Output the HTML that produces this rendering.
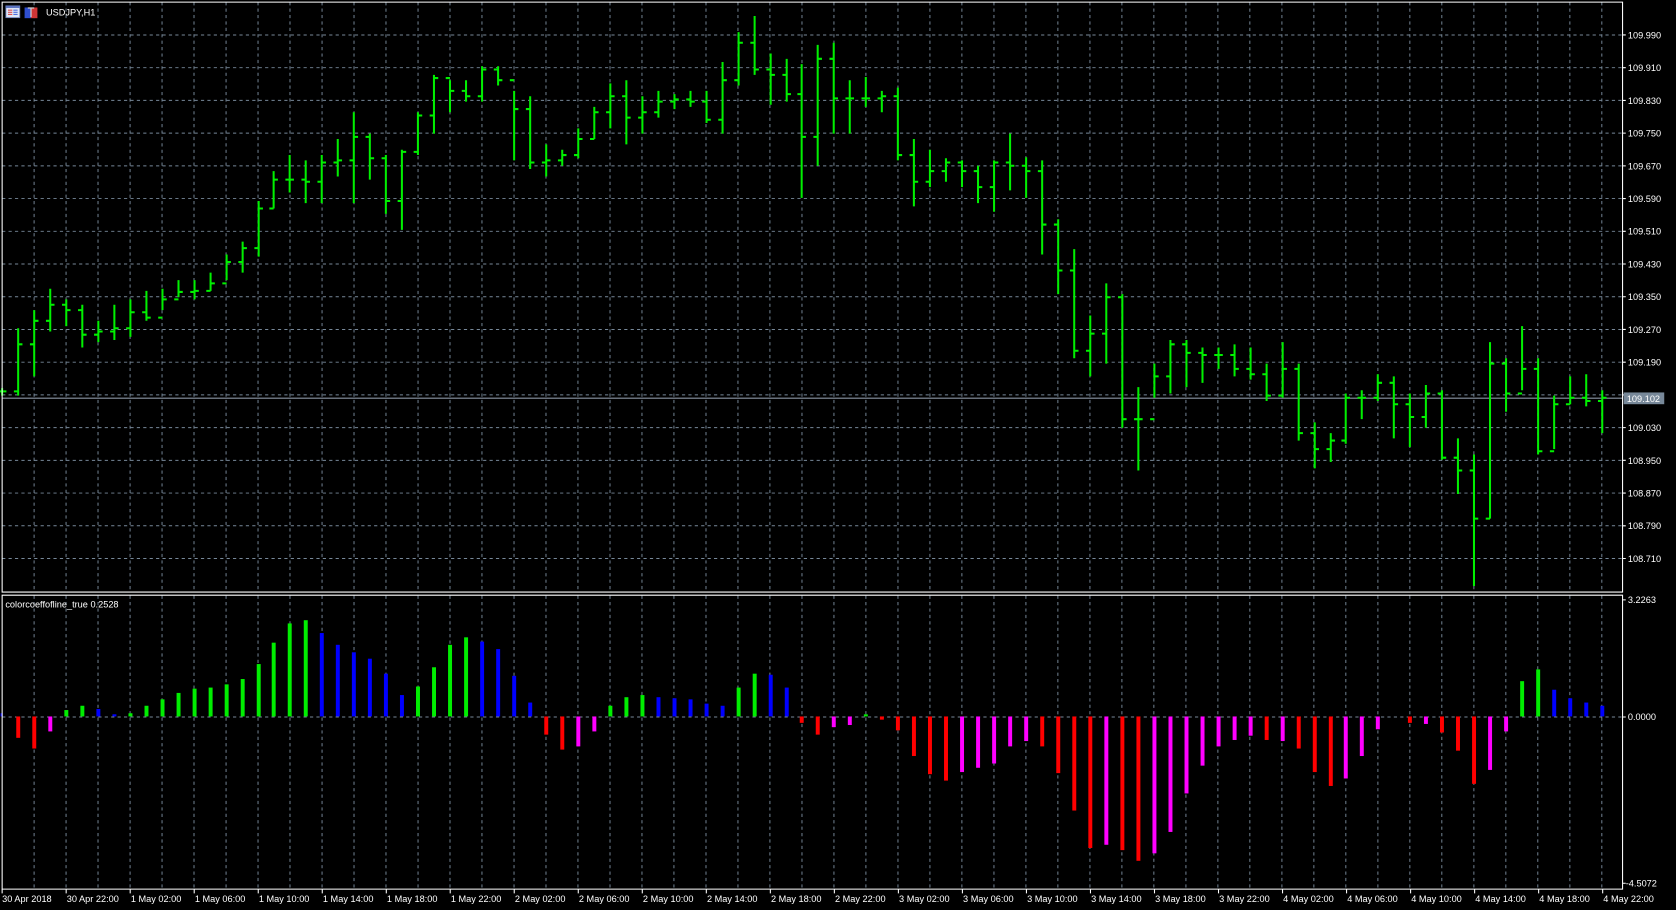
<!DOCTYPE html>
<html><head><meta charset="utf-8"><style>
html,body{margin:0;padding:0;background:#000;width:1676px;height:910px;overflow:hidden}
svg{display:block}
text{font-family:"Liberation Sans","DejaVu Sans",sans-serif;fill:#fff;font-size:8.6px}
</style></head><body>
<svg width="1676" height="910" viewBox="0 0 1568 851" preserveAspectRatio="none">
<rect width="1568" height="851" fill="#000"/>
<!-- grid vertical -->
<g stroke="#778899" stroke-width="0.9" stroke-dasharray="3,3">
<path d="M31.9 2V553M61.8 2V553M91.7 2V553M121.7 2V553M151.6 2V553M181.5 2V553M211.5 2V553M241.4 2V553M271.3 2V553M301.3 2V553M331.2 2V553M361.1 2V553M391.1 2V553M421 2V553M450.9 2V553M480.9 2V553M510.8 2V553M540.7 2V553M570.7 2V553M600.6 2V553M630.5 2V553M660.5 2V553M690.4 2V553M720.3 2V553M750.3 2V553M780.2 2V553M810.1 2V553M840.1 2V553M870 2V553M899.9 2V553M929.9 2V553M959.8 2V553M989.7 2V553M1019.7 2V553M1049.6 2V553M1079.5 2V553M1109.5 2V553M1139.4 2V553M1169.3 2V553M1199.3 2V553M1229.2 2V553M1259.1 2V553M1289.1 2V553M1319 2V553M1348.9 2V553M1378.9 2V553M1408.8 2V553M1438.7 2V553M1468.7 2V553M1498.6 2V553"/>
<path d="M31.9 557V831M61.8 557V831M91.7 557V831M121.7 557V831M151.6 557V831M181.5 557V831M211.5 557V831M241.4 557V831M271.3 557V831M301.3 557V831M331.2 557V831M361.1 557V831M391.1 557V831M421 557V831M450.9 557V831M480.9 557V831M510.8 557V831M540.7 557V831M570.7 557V831M600.6 557V831M630.5 557V831M660.5 557V831M690.4 557V831M720.3 557V831M750.3 557V831M780.2 557V831M810.1 557V831M840.1 557V831M870 557V831M899.9 557V831M929.9 557V831M959.8 557V831M989.7 557V831M1019.7 557V831M1049.6 557V831M1079.5 557V831M1109.5 557V831M1139.4 557V831M1169.3 557V831M1199.3 557V831M1229.2 557V831M1259.1 557V831M1289.1 557V831M1319 557V831M1348.9 557V831M1378.9 557V831M1408.8 557V831M1438.7 557V831M1468.7 557V831M1498.6 557V831"/>
<path d="M2 32.7H1518M2 63.3H1518M2 93.9H1518M2 124.5H1518M2 155.1H1518M2 185.7H1518M2 216.3H1518M2 246.9H1518M2 277.5H1518M2 308.1H1518M2 338.7H1518M2 369.3H1518M2 399.9H1518M2 430.5H1518M2 461.1H1518M2 491.7H1518M2 522.3H1518M2 670.5H1518"/>
</g>
<!-- current price line -->
<path d="M2 372.4H1518" stroke="#8a96a4" stroke-width="1"/>
<!-- price bars -->
<path fill="none" stroke="#00f000" stroke-width="1.9" d="
M2 363V370M-2 366H2M2 366H6
M17 307V370M13 366H17M17 322H21
M32 290V352M28 322H32M32 300H36
M47 270V310M43 300H47M47 285H51
M62 280V305M58 285H62M62 290H66
M77 285V325M73 290H77M77 313H81
M92 300V320M88 313H92M92 310H96
M107 285V318M103 310H107M107 307H111
M122 280V315M118 307H122M122 292H126
M137 272V300M133 292H137M137 297H141
M152 270V290M148 297H152M152 280H156
M167 262V278M163 280H167M167 273H171
M182 262V280M178 273H182M182 272H186
M197 255V272M193 272H197M197 265H201
M212 238V262M208 265H212M212 245H216
M227 226V255M223 245H227M227 232H231
M242 188V240M238 232H242M242 195H246
M256 160V195M252 195H256M256 168H260
M271 145V180M267 168H271M271 168H275
M286 150V190M282 168H286M286 170H290
M301 145V190M297 170H301M301 152H305
M316 130V165M312 152H316M316 150H320
M331 105V190M327 150H331M331 128H335
M346 125V168M342 128H346M346 148H350
M361 145V200M357 148H361M361 188H365
M376 140V215M372 188H376M376 142H380
M391 105V145M387 142H391M391 108H395
M406 70V125M402 108H406M406 73H410
M421 75V105M417 73H421M421 85H425
M436 75V95M432 85H436M436 90H440
M451 62V95M447 90H451M451 65H455
M466 62V80M462 65H466M466 75H470
M481 85V150M477 75H481M481 102H485
M496 90V158M492 102H496M496 152H500
M511 135V165M507 152H511M511 150H515
M526 140V155M522 150H526M526 145H530
M541 120V148M537 145H541M541 130H545
M556 100V130M552 130H556M556 105H560
M571 78V120M567 105H571M571 90H575
M586 75V135M582 90H586M586 110H590
M601 90V125M597 110H601M601 105H605
M616 85V110M612 105H616M616 95H620
M631 88V102M627 95H631M631 93H635
M646 85V100M642 93H646M646 95H650
M661 85V115M657 95H661M661 112H665
M676 58V125M672 112H676M676 75H680
M691 30V80M687 75H691M691 40H695
M706 15V70M702 40H706M706 65H710
M721 50V98M717 65H721M721 70H725
M736 55V95M732 70H736M736 88H740
M750 60V185M746 88H750M750 128H754
M765 42V155M761 128H765M765 55H769
M780 40V125M776 55H780M780 92H784
M795 75V125M791 92H795M795 92H799
M810 72V100M806 92H810M810 92H814
M825 85V105M821 92H825M825 90H829
M840 82V150M836 90H840M840 145H844
M855 130V193M851 145H855M855 170H859
M870 140V175M866 170H870M870 160H874
M885 148V170M881 160H885M885 152H889
M900 150V175M896 152H900M900 160H904
M915 155V190M911 160H915M915 175H919
M930 150V198M926 175H930M930 152H934
M945 125V178M941 152H945M945 155H949
M960 147V185M956 155H960M960 160H964
M975 150V238M971 160H975M975 210H979
M990 205V275M986 210H990M990 253H994
M1005 233V335M1001 253H1005M1005 328H1009
M1020 295V352M1016 328H1020M1020 312H1024
M1035 265V340M1031 312H1035M1035 278H1039
M1050 275V400M1046 278H1050M1050 392H1054
M1065 362V440M1061 392H1065M1065 392H1069
M1080 340V372M1076 392H1080M1080 352H1084
M1095 318V368M1091 352H1095M1095 322H1099
M1110 318V362M1106 322H1110M1110 330H1114
M1125 325V358M1121 330H1125M1125 332H1129
M1140 325V345M1136 332H1140M1140 332H1144
M1155 322V352M1151 332H1155M1155 345H1159
M1170 325V355M1166 345H1170M1170 350H1174
M1185 340V375M1181 350H1185M1185 370H1189
M1200 320V372M1196 370H1200M1200 345H1204
M1215 340V412M1211 345H1215M1215 405H1219
M1230 395V438M1226 405H1230M1230 420H1234
M1245 405V432M1241 420H1245M1245 412H1249
M1259 368V415M1255 412H1259M1259 372H1263
M1274 365V392M1270 372H1274M1274 372H1278
M1289 350V375M1285 372H1289M1289 358H1293
M1304 352V410M1300 358H1304M1304 378H1308
M1319 368V418M1315 378H1319M1319 390H1323
M1334 360V400M1330 390H1334M1334 368H1338
M1349 365V430M1345 368H1349M1349 428H1353
M1364 410V462M1360 428H1364M1364 440H1368
M1379 425V548M1375 440H1379M1379 485H1383
M1394 320V485M1390 485H1394M1394 340H1398
M1409 335V385M1405 340H1409M1409 368H1413
M1424 305V365M1420 368H1424M1424 345H1428
M1439 335V425M1435 345H1439M1439 422H1443
M1454 370V420M1450 422H1454M1454 378H1458
M1469 352V378M1465 378H1469M1469 372H1473
M1484 350V380M1480 372H1484M1484 375H1488
M1499 365V405M1495 375H1499M1499 372H1503"/>
<!-- histogram -->
<g>
<g fill="#ff0000">
<rect x="15.2" y="670" width="3.7" height="20"/><rect x="30.2" y="670" width="3.7" height="30"/>
<rect x="509.2" y="670" width="3.7" height="17"/><rect x="524.2" y="670" width="3.7" height="31"/>
<rect x="748.2" y="670" width="3.7" height="6"/><rect x="763.2" y="670" width="3.7" height="17"/>
<rect x="823.2" y="670" width="3.7" height="3"/><rect x="838.2" y="670" width="3.7" height="13"/>
<rect x="853.2" y="670" width="3.7" height="37"/><rect x="868.2" y="670" width="3.7" height="54"/>
<rect x="883.2" y="670" width="3.7" height="60"/>
<rect x="973.2" y="670" width="3.7" height="28"/><rect x="988.2" y="670" width="3.7" height="53"/>
<rect x="1003.2" y="670" width="3.7" height="88"/><rect x="1018.2" y="670" width="3.7" height="123"/>
<rect x="1048.2" y="670" width="3.7" height="125"/><rect x="1063.2" y="670" width="3.7" height="135"/>
<rect x="1183.2" y="670" width="3.7" height="22"/><rect x="1213.2" y="670" width="3.7" height="30"/>
<rect x="1228.2" y="670" width="3.7" height="52"/><rect x="1243.2" y="670" width="3.7" height="65"/>
<rect x="1317.2" y="670" width="3.7" height="6"/><rect x="1347.2" y="670" width="3.7" height="15"/>
<rect x="1362.2" y="670" width="3.7" height="32"/><rect x="1377.2" y="670" width="3.7" height="63"/>
</g>
<g fill="#ff00ff">
<rect x="45.2" y="670" width="3.7" height="14"/><rect x="539.2" y="670" width="3.7" height="28"/>
<rect x="554.2" y="670" width="3.7" height="14"/><rect x="778.2" y="670" width="3.7" height="10"/>
<rect x="793.2" y="670" width="3.7" height="8"/>
<rect x="898.2" y="670" width="3.7" height="52"/><rect x="913.2" y="670" width="3.7" height="48"/>
<rect x="928.2" y="670" width="3.7" height="44"/><rect x="943.2" y="670" width="3.7" height="28"/>
<rect x="958.2" y="670" width="3.7" height="23"/><rect x="1033.2" y="670" width="3.7" height="120"/>
<rect x="1078.2" y="670" width="3.7" height="128"/><rect x="1093.2" y="670" width="3.7" height="108"/>
<rect x="1108.2" y="670" width="3.7" height="72"/><rect x="1123.2" y="670" width="3.7" height="46"/>
<rect x="1138.2" y="670" width="3.7" height="28"/><rect x="1153.2" y="670" width="3.7" height="22"/>
<rect x="1168.2" y="670" width="3.7" height="18"/><rect x="1198.2" y="670" width="3.7" height="23"/>
<rect x="1257.2" y="670" width="3.7" height="58"/><rect x="1272.2" y="670" width="3.7" height="37"/>
<rect x="1287.2" y="670" width="3.7" height="12"/><rect x="1332.2" y="670" width="3.7" height="7"/>
<rect x="1392.2" y="670" width="3.7" height="50"/><rect x="1407.2" y="670" width="3.7" height="14"/>
</g>
<g fill="#00ee00">
<rect x="60.2" y="664" width="3.7" height="6"/><rect x="75.2" y="660" width="3.7" height="10"/>
<rect x="120.2" y="667" width="3.7" height="3"/><rect x="135.2" y="660" width="3.7" height="10"/>
<rect x="150.2" y="654" width="3.7" height="16"/><rect x="165.2" y="648" width="3.7" height="22"/>
<rect x="180.2" y="644" width="3.7" height="26"/><rect x="195.2" y="643" width="3.7" height="27"/>
<rect x="210.2" y="640" width="3.7" height="30"/><rect x="225.2" y="635" width="3.7" height="35"/>
<rect x="240.2" y="621" width="3.7" height="49"/><rect x="254.2" y="601" width="3.7" height="69"/>
<rect x="269.2" y="583" width="3.7" height="87"/><rect x="284.2" y="580" width="3.7" height="90"/>
<rect x="389.2" y="642" width="3.7" height="28"/><rect x="404.2" y="624" width="3.7" height="46"/>
<rect x="419.2" y="603" width="3.7" height="67"/><rect x="434.2" y="596" width="3.7" height="74"/>
<rect x="569.2" y="660" width="3.7" height="10"/><rect x="584.2" y="652" width="3.7" height="18"/>
<rect x="599.2" y="650" width="3.7" height="20"/><rect x="689.2" y="643" width="3.7" height="27"/>
<rect x="704.2" y="630" width="3.7" height="40"/><rect x="808.2" y="668" width="3.7" height="2"/>
<rect x="1422.2" y="637" width="3.7" height="33"/><rect x="1437.2" y="626" width="3.7" height="44"/>
</g>
<g fill="#0000ff">
<rect x="0.5" y="667" width="2" height="3"/>
<rect x="90.2" y="663" width="3.7" height="7"/><rect x="105.2" y="668" width="3.7" height="2"/>
<rect x="299.2" y="592" width="3.7" height="78"/><rect x="314.2" y="603" width="3.7" height="67"/>
<rect x="329.2" y="610" width="3.7" height="60"/><rect x="344.2" y="616" width="3.7" height="54"/>
<rect x="359.2" y="630" width="3.7" height="40"/><rect x="374.2" y="650" width="3.7" height="20"/>
<rect x="449.2" y="600" width="3.7" height="70"/><rect x="464.2" y="607" width="3.7" height="63"/>
<rect x="479.2" y="632" width="3.7" height="38"/><rect x="494.2" y="657" width="3.7" height="13"/>
<rect x="614.2" y="652" width="3.7" height="18"/><rect x="629.2" y="653" width="3.7" height="17"/>
<rect x="644.2" y="654" width="3.7" height="16"/><rect x="659.2" y="658" width="3.7" height="12"/>
<rect x="674.2" y="660" width="3.7" height="10"/><rect x="719.2" y="631" width="3.7" height="39"/>
<rect x="734.2" y="643" width="3.7" height="27"/><rect x="1452.2" y="645" width="3.7" height="25"/>
<rect x="1467.2" y="653" width="3.7" height="17"/><rect x="1482.2" y="657" width="3.7" height="13"/>
<rect x="1497.2" y="660" width="3.7" height="10"/>
</g>
</g>
<!-- borders -->
<g stroke="#fff" stroke-width="1" fill="none">
<path d="M2 2H1518V553.7H2Z"/>
<path d="M2 556.6H1518V831.5H2Z"/>
<path d="M2 831.5V835.5M61.9 831.5V835.5M121.8 831.5V835.5M181.7 831.5V835.5M241.6 831.5V835.5M301.5 831.5V835.5M361.4 831.5V835.5M421.2 831.5V835.5M481.1 831.5V835.5M541 831.5V835.5M600.9 831.5V835.5M660.8 831.5V835.5M720.7 831.5V835.5M780.6 831.5V835.5M840.5 831.5V835.5M900.4 831.5V835.5M960.3 831.5V835.5M1020.2 831.5V835.5M1080.1 831.5V835.5M1140 831.5V835.5M1199.9 831.5V835.5M1259.8 831.5V835.5M1319.7 831.5V835.5M1379.6 831.5V835.5M1439.5 831.5V835.5M1499.4 831.5V835.5"/>
<path d="M1518 32.7h3M1518 63.3h3M1518 93.9h3M1518 124.5h3M1518 155.1h3M1518 185.7h3M1518 216.3h3M1518 246.9h3M1518 277.5h3M1518 308.1h3M1518 338.7h3M1518 369.3h3M1518 399.9h3M1518 430.5h3M1518 461.1h3M1518 491.7h3M1518 522.3h3M1518 561h3M1518 670.5h3M1518 826h3"/>
</g>
<!-- price labels -->
<g>
<text x="1523" y="35.9">109.990</text><text x="1523" y="66.5">109.910</text><text x="1523" y="97.1">109.830</text>
<text x="1523" y="127.7">109.750</text><text x="1523" y="158.3">109.670</text><text x="1523" y="188.9">109.590</text>
<text x="1523" y="219.5">109.510</text><text x="1523" y="250.1">109.430</text><text x="1523" y="280.7">109.350</text>
<text x="1523" y="311.3">109.270</text><text x="1523" y="341.9">109.190</text>
<text x="1523" y="403.1">109.030</text><text x="1523" y="433.7">108.950</text><text x="1523" y="464.3">108.870</text>
<text x="1523" y="494.9">108.790</text><text x="1523" y="525.5">108.710</text>
<rect x="1519" y="367" width="38" height="11" fill="#778899"/>
<text x="1522" y="375.8">109.102</text>
<text x="1523" y="564">3.2263</text><text x="1523" y="673.5">0.0000</text><text x="1521" y="829">-4.5072</text>
</g>
<!-- time labels -->
<g>
<text x="2" y="843.5">30 Apr 2018</text><text x="62.5" y="843.5">30 Apr 22:00</text>
<text x="122.4" y="843.5">1 May 02:00</text><text x="182.3" y="843.5">1 May 06:00</text>
<text x="242.2" y="843.5">1 May 10:00</text><text x="302.1" y="843.5">1 May 14:00</text>
<text x="362" y="843.5">1 May 18:00</text><text x="421.8" y="843.5">1 May 22:00</text>
<text x="481.7" y="843.5">2 May 02:00</text><text x="541.6" y="843.5">2 May 06:00</text>
<text x="601.5" y="843.5">2 May 10:00</text><text x="661.4" y="843.5">2 May 14:00</text>
<text x="721.3" y="843.5">2 May 18:00</text><text x="781.2" y="843.5">2 May 22:00</text>
<text x="841.1" y="843.5">3 May 02:00</text><text x="901" y="843.5">3 May 06:00</text>
<text x="960.9" y="843.5">3 May 10:00</text><text x="1020.8" y="843.5">3 May 14:00</text>
<text x="1080.7" y="843.5">3 May 18:00</text><text x="1140.6" y="843.5">3 May 22:00</text>
<text x="1200.5" y="843.5">4 May 02:00</text><text x="1260.4" y="843.5">4 May 06:00</text>
<text x="1320.3" y="843.5">4 May 10:00</text><text x="1380.2" y="843.5">4 May 14:00</text>
<text x="1440.1" y="843.5">4 May 18:00</text><text x="1500" y="843.5">4 May 22:00</text>
</g>
<!-- header -->
<rect x="5.5" y="5.5" width="13" height="11" fill="#dfe6f6" stroke="#6b7fb8" stroke-width="0.8"/>
<rect x="5.5" y="5.5" width="13" height="2" fill="#5d74c0"/>
<path d="M7.5 9.5h4M7.5 11.5h4M7.5 13.5h4" stroke="#e05050" stroke-width="1"/>
<path d="M12.5 9.5h4M12.5 11.5h4M12.5 13.5h4" stroke="#5070e0" stroke-width="1"/>
<rect x="23" y="7" width="6" height="10" fill="#2f4fd0"/>
<rect x="29" y="7" width="6" height="10" fill="#d03535"/>
<path d="M26 7.5h6M29 7.5V16" stroke="#ccc" stroke-width="1.2"/>
<text x="43" y="14.5" font-size="8.8">USDJPY,H1</text>
<text x="5" y="568">colorcoeffofline_true 0.2528</text>
</svg>
</body></html>
